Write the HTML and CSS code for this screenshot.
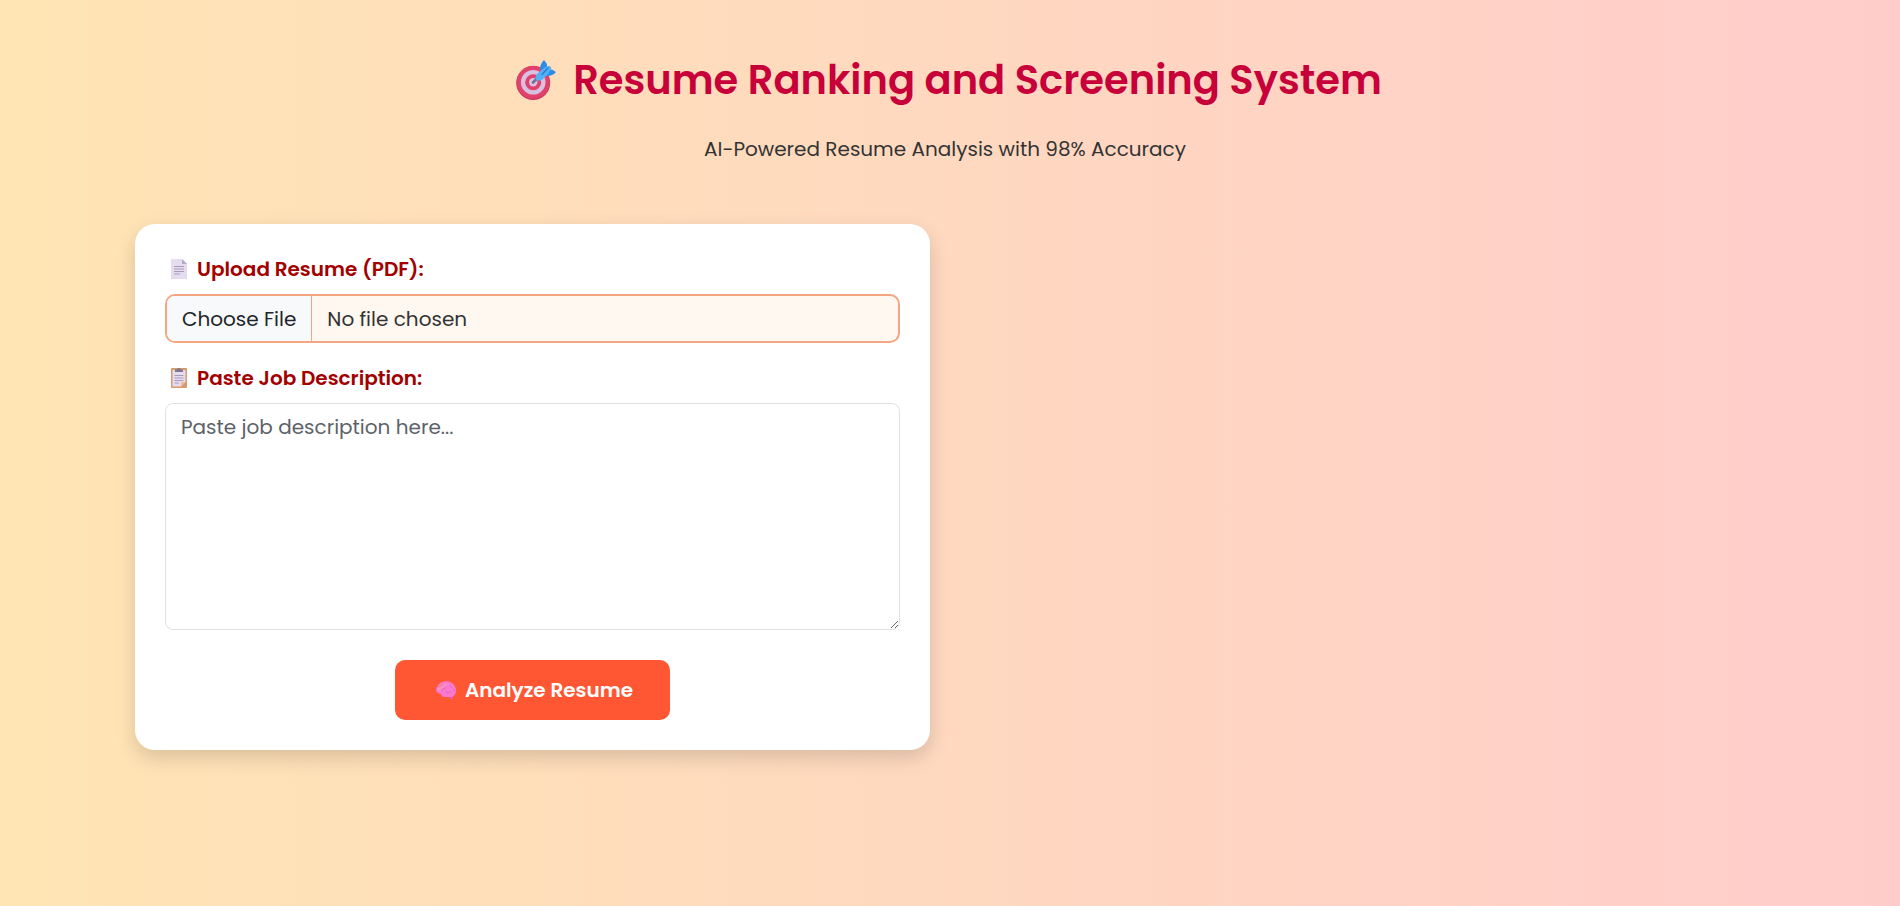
FILE: index.html
```html
<!DOCTYPE html>
<html lang="en">
<head>
<meta charset="utf-8">
<meta name="viewport" content="width=device-width, initial-scale=1">
<title>Resume Ranking and Screening System</title>
<link rel="stylesheet" href="styles.css">
</head>
<body>
<main class="page">
  <header class="header">
    <h1 class="title">
      <svg class="title-icon" viewBox="0 0 40 40" aria-hidden="true">
        <circle cx="17.2" cy="23" r="17" fill="#c93560"/>
        <circle cx="17.2" cy="22.3" r="16.5" fill="#e0426b"/>
        <circle cx="17.2" cy="22.3" r="12.3" fill="#d9c0e0"/>
        <circle cx="17.2" cy="22.3" r="8" fill="#e0406c"/>
        <circle cx="17.2" cy="22.3" r="4.2" fill="#d9c0e0"/>
        <path d="M17 22.5L22 17.5" stroke="#6d7391" stroke-width="2.6" stroke-linecap="round"/>
        <path d="M24 9Q24 4 28 0L31 4L31 10L36 9.5L40 12Q37 16 31 16Z" fill="#2f8ce6"/>
        <path d="M32 6Q36 6 35 9L32 14L26 20Q21 22 19.5 19Q19 17 21 14L28 8Z" fill="#50b2f5"/>
        <path d="M26 14.500L32 8" stroke="#2879cc" stroke-width="1.3" fill="none" stroke-linecap="round"/>
      </svg>
      <span>Resume Ranking and Screening System</span>
    </h1>
    <p class="subtitle">AI-Powered Resume Analysis with 98% Accuracy</p>
  </header>
  <div class="columns">
    <form class="card">
      <label class="label" for="resume">
        <svg class="label-icon" viewBox="0 0 16 20" aria-hidden="true">
          <path d="M0 0H11L16 5V20H0Z" fill="#e6dcef"/>
          <path d="M11 0L16 5H11Z" fill="#b6a9c3"/>
          <path d="M3 7.5H13M3 10H13M3 12.5H13M3 15H9" stroke="#a99bb8" stroke-width="1"/>
        </svg>
        <span>Upload Resume (PDF):</span>
      </label>
      <input class="file" id="resume" type="file" accept=".pdf">
      <label class="label" for="job">
        <svg class="label-icon" viewBox="0 0 16 20" aria-hidden="true">
          <rect width="16" height="20" rx="1" fill="#d99a70"/>
          <path d="M1.5 2H14.5V14L10 18.5H1.5Z" fill="#e6dcef"/>
          <path d="M10 18.5V14H14.5Z" fill="#f0bb91"/>
          <path d="M4 4V1.5H6Q6.2 0 8 0T10 1.5H12V4Z" fill="#81788d"/>
          <path d="M3.5 7.5H12.5M3.5 10H12.5M3.5 12.5H12.5M3.5 15H8" stroke="#a99bb8" stroke-width="1"/>
        </svg>
        <span>Paste Job Description:</span>
      </label>
      <textarea class="text" id="job" placeholder="Paste job description here..."></textarea>
      <button class="submit" type="submit">
        <svg class="submit-icon" viewBox="0 0 20 18" aria-hidden="true">
          <path d="M13 15L16.5 15L17 18L14.5 18Z" fill="#e060b8"/>
          <path d="M1 6Q4 0 11 0Q18 1 20 8Q20.5 14 16 16H8Q5 15 5 13Q0 12 0 9Q0 7 1 6Z" fill="#fb78d0"/>
          <path d="M2 5Q8 0 15 4Q9 3 7 8Q3 12 1 8Z" fill="#f98fc0"/>
          <path d="M2 6Q5 5 7 3M5 10Q6 7 9 7M10 11Q12 13 15 11M14 4Q14 6 16 7M17 10L19 9" stroke="#d864a8" stroke-width="0.8" fill="none" stroke-linecap="round"/>
        </svg>
        <span>Analyze Resume</span>
      </button>
    </form>
  </div>
</main>
</body>
</html>
```

FILE: styles.css
```css
* { box-sizing: border-box; }

body {
  margin: 0;
  min-height: 100vh;
  background: linear-gradient(to right, #ffe5b4, #ffcccb);
  font-family: Poppins, Inter, "Open Sans", sans-serif;
  font-size: 20px;
  line-height: 30px;
  color: #333;
}

.page {
  padding: 50px 145px 50px 135px;
}

.header {
  margin-bottom: 60px;
  text-align: center;
}

.title {
  display: flex;
  justify-content: center;
  align-items: center;
  gap: 17px;
  margin: 0 0 24px;
  padding-left: 8px;
  font-size: 40px;
  font-weight: 600;
  line-height: 60px;
  color: #c70039;
}

.title-icon {
  width: 40px;
  height: 40px;
  flex: none;
}

.subtitle { margin: 0; }

.columns {
  display: grid;
  grid-template-columns: repeat(2, minmax(0, 1fr));
  gap: 30px;
}

.card {
  display: flex;
  flex-direction: column;
  padding: 30px;
  border-radius: 20px;
  background: #fff;
  box-shadow: 0 8px 20px rgba(0, 0, 0, 0.15);
}

.label {
  display: flex;
  align-items: center;
  gap: 10px;
  margin-bottom: 10px;
  padding-left: 6px;
  font-weight: 600;
  color: #a30000;
}

.label-icon {
  width: 16px;
  height: 20px;
}

.file {
  width: 100%;
  margin-bottom: 20px;
  border: 2px solid #f4a582;
  border-radius: 10px;
  background: #fff8f0;
  font: inherit;
  color: #333;
  overflow: hidden;
}

.file::file-selector-button {
  height: 45px;
  margin: 0 15px 0 0;
  padding: 0 15px;
  border: 0;
  border-right: 1px solid #f4a582;
  background: #f8f9fa;
  font: inherit;
  color: #212529;
}

.text {
  width: 100%;
  height: 227px;
  margin-bottom: 30px;
  padding: 8px 15px;
  border: 1px solid #dee2e6;
  border-radius: 8px;
  background: #fff;
  font: inherit;
  color: #212529;
  resize: vertical;
}

.text::placeholder {
  color: #5c6268;
  opacity: 1;
}

.submit {
  display: flex;
  align-items: center;
  align-self: center;
  gap: 9px;
  padding: 15px 37px 15px 41px;
  border: 0;
  border-radius: 10px;
  background: #ff5733;
  font: inherit;
  font-weight: 600;
  color: #fff;
}

.submit-icon {
  width: 20px;
  height: 18px;
}
```
